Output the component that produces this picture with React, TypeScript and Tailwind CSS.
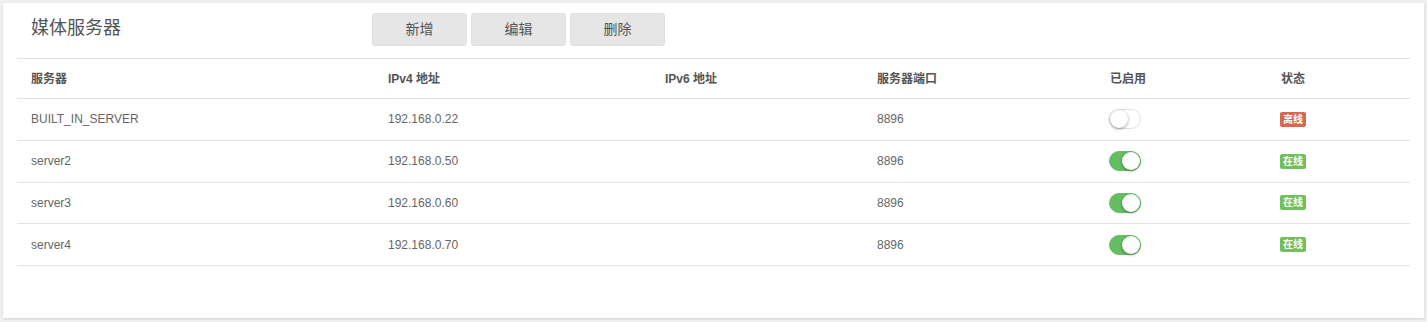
import React from 'react';

const servers = [
  { name: 'BUILT_IN_SERVER', ipv4: '192.168.0.22', ipv6: '', port: '8896', enabled: false, online: false },
  { name: 'server2', ipv4: '192.168.0.50', ipv6: '', port: '8896', enabled: true, online: true },
  { name: 'server3', ipv4: '192.168.0.60', ipv6: '', port: '8896', enabled: true, online: true },
  { name: 'server4', ipv4: '192.168.0.70', ipv6: '', port: '8896', enabled: true, online: true },
];

const cols = 'grid grid-cols-[357px_277px_212px_233px_171px_1fr] items-center';

function Toggle({ on }: { on: boolean }) {
  return (
    <span
      className={
        'relative inline-block w-[32px] h-[20px] rounded-full border ' +
        (on ? 'bg-[#64bd63] border-[#64bd63]' : 'bg-white border-[#dfdfdf]')
      }
    >
      <span
        className={
          'absolute top-[0px] w-[18px] h-[18px] rounded-full bg-white shadow-[0_1px_3px_rgba(0,0,0,0.4)] ' +
          (on ? 'left-[12px]' : 'left-[0px]')
        }
      />
    </span>
  );
}

function Badge({ online }: { online: boolean }) {
  return (
    <span
      className={
        'inline-block px-[3px] h-[15px] leading-[15px] rounded-[2px] text-[10px] font-bold text-white ' +
        (online ? 'bg-[#72c05a]' : 'bg-[#d5684f]')
      }
    >
      {online ? '在线' : '离线'}
    </span>
  );
}

export default function App() {
  return (
    <div
      className="w-[1427px] h-[322px] bg-[#efefef] p-[3px]"
      style={{ fontFamily: '"Liberation Sans", Arial, "Noto Sans CJK SC", sans-serif' }}
    >
      <div className="h-[315px] w-[1421px] bg-white shadow-[0_1px_2px_rgba(0,0,0,0.12)]">
        {/* Header */}
        <div className="flex items-center pt-[10px] pb-[12px]">
          <div className="w-[369px] pl-[28px] text-[18px] text-[#555] leading-none pb-[3px]">媒体服务器</div>
          <div className="flex gap-[4px]">
            {['新增', '编辑', '删除'].map((b) => (
              <button
                key={b}
                className="w-[95px] h-[33px] bg-[#e6e6e6] border border-[#e0e0e0] rounded-[3px] text-[14px] text-[#555]"
              >
                {b}
              </button>
            ))}
          </div>
        </div>

        {/* Table */}
        <div className="mx-[14px] border-t border-[#e3e3e3] text-[12px]">
          <div className={cols + ' h-[40px] border-b border-[#e3e3e3] font-bold text-[#555]'}>
            <div className="pl-[14px]">服务器</div>
            <div className="pl-[14px]">IPv4 地址</div>
            <div className="pl-[14px]">IPv6 地址</div>
            <div className="pl-[14px]">服务器端口</div>
            <div className="pl-[14px]">已启用</div>
            <div className="pl-[14px]">状态</div>
          </div>
          {servers.map((s) => (
            <div key={s.name} className={cols + ' h-[41.75px] border-b border-[#e3e3e3] text-[#666]'}>
              <div className="pl-[14px]">{s.name}</div>
              <div className="pl-[14px]">{s.ipv4}</div>
              <div className="pl-[14px]">{s.ipv6}</div>
              <div className="pl-[14px]">{s.port}</div>
              <div className="pl-[13px] flex items-center">
                <Toggle on={s.enabled} />
              </div>
              <div className="pl-[13px] flex items-center">
                <Badge online={s.online} />
              </div>
            </div>
          ))}
        </div>
      </div>
    </div>
  );
}
